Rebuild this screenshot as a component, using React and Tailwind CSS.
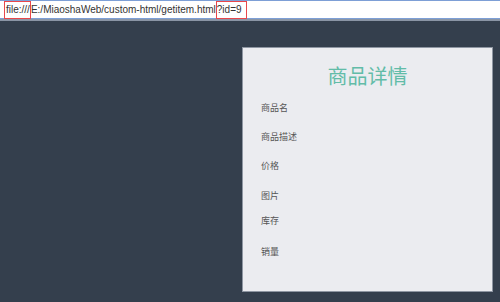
import React from 'react';

const fields = [
  { label: '商品名', gap: 'mt-0' },
  { label: '商品描述', gap: 'mt-[18px]' },
  { label: '价格', gap: 'mt-[18px]' },
  { label: '图片', gap: 'mt-[19px]' },
  { label: '库存', gap: 'mt-[14px]' },
  { label: '销量', gap: 'mt-[20px]' },
];

const App = () => {
  return (
    <div className="w-[500px] h-[302px] bg-[#343f4d] flex flex-col overflow-hidden" style={{ fontFamily: '"Microsoft YaHei", "Noto Sans CJK SC", sans-serif' }}>
      <div className="h-[19px] bg-white border-t border-b border-[#7d9fd6] flex items-center shrink-0">
        <div className="flex items-center text-[10px] leading-none text-[#333] pl-[4px]" style={{ fontFamily: '"Liberation Sans", Arial, sans-serif' }}>
          <span className="border border-[#e8474c] pl-[1px] py-[3px]">file:///</span>
          <span>E:/MiaoshaWeb/custom-html/getitem.html</span>
          <span className="border border-[#e8474c] pr-[4px] py-[3px]">?id=9</span>
        </div>
      </div>
      <div className="h-[2px] bg-[#8a95a5] shrink-0" />
      <div className="flex-1 flex justify-end pr-[7px] pt-[26px] pb-[10px]">
        <div className="w-[251px] bg-[#ebecf0] border border-[#8e96a2] flex flex-col">
          <h1 className="text-center text-[20px] leading-none text-[#62bca8] mt-[18px]">商品详情</h1>
          <div className="flex flex-col pl-[18px] mt-[16px] text-[9px] leading-[11px] text-[#555]">
            {fields.map(f => (
              <div key={f.label} className={f.gap}>{f.label}</div>
            ))}
          </div>
        </div>
      </div>
    </div>
  );
};

export default App;
